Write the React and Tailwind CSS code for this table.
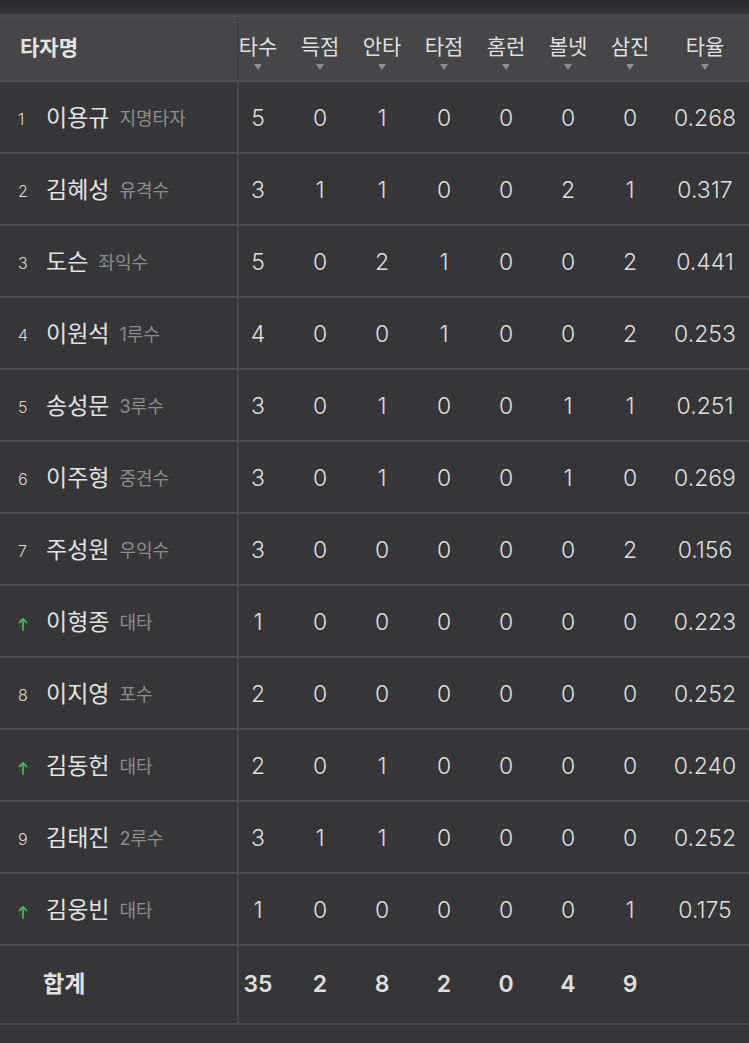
const cols = ["타수", "득점", "안타", "타점", "홈런", "볼넷", "삼진"];

const players = [
  { no: "1", name: "이용규", pos: "지명타자", s: [5, 0, 1, 0, 0, 0, 0], avg: "0.268" },
  { no: "2", name: "김혜성", pos: "유격수", s: [3, 1, 1, 0, 0, 2, 1], avg: "0.317" },
  { no: "3", name: "도슨", pos: "좌익수", s: [5, 0, 2, 1, 0, 0, 2], avg: "0.441" },
  { no: "4", name: "이원석", pos: "1루수", s: [4, 0, 0, 1, 0, 0, 2], avg: "0.253" },
  { no: "5", name: "송성문", pos: "3루수", s: [3, 0, 1, 0, 0, 1, 1], avg: "0.251" },
  { no: "6", name: "이주형", pos: "중견수", s: [3, 0, 1, 0, 0, 1, 0], avg: "0.269" },
  { no: "7", name: "주성원", pos: "우익수", s: [3, 0, 0, 0, 0, 0, 2], avg: "0.156" },
  { no: "up", name: "이형종", pos: "대타", s: [1, 0, 0, 0, 0, 0, 0], avg: "0.223" },
  { no: "8", name: "이지영", pos: "포수", s: [2, 0, 0, 0, 0, 0, 0], avg: "0.252" },
  { no: "up", name: "김동헌", pos: "대타", s: [2, 0, 1, 0, 0, 0, 0], avg: "0.240" },
  { no: "9", name: "김태진", pos: "2루수", s: [3, 1, 1, 0, 0, 0, 0], avg: "0.252" },
  { no: "up", name: "김웅빈", pos: "대타", s: [1, 0, 0, 0, 0, 0, 1], avg: "0.175" },
];

const totals = [35, 2, 8, 2, 0, 4, 9];

const font = { fontFamily: '"Inter", "Noto Sans CJK KR", sans-serif' };

function UpArrow() {
  return (
    <svg width="10" height="14" viewBox="0 0 10 14" className="mt-[2px]">
      <path d="M5 13V2M1.5 5.5L5 2l3.5 3.5" stroke="#4cb050" strokeWidth="1.8" fill="none" strokeLinecap="round" strokeLinejoin="round" />
    </svg>
  );
}

function Caret() {
  return <div className="w-0 h-0 border-l-[4px] border-r-[4px] border-t-[6px] border-l-transparent border-r-transparent border-t-[#8e8e90]" />;
}

const App = () => {
  return (
    <div className="w-[749px] h-[1043px] bg-[#363638] overflow-hidden text-[#dedede]" style={font}>
      <div className="h-[14px] bg-gradient-to-b from-[#2c2c2e] to-[#353537]" />
      <div className="h-[3px] bg-[#4c4c4e]" />

      {/* header */}
      <div className="flex h-[65px] bg-[#464648] border-b-2 border-[#525254]">
        <div className="w-[239px] shrink-0 border-r-2 border-[#3f3f41] flex items-center pl-[20px] text-[21px] font-bold text-[#e4e4e4] pb-[2px]">
          타자명
        </div>
        <div className="flex -ml-[12px]">
          {cols.map((c) => (
            <div key={c} className="w-[62px] flex flex-col items-center pt-[15px]">
              <span className="text-[21px] leading-[30px]">{c}</span>
              <div className="mt-[2px]"><Caret /></div>
            </div>
          ))}
          <div className="w-[88px] flex flex-col items-center pt-[15px]">
            <span className="text-[21px] leading-[30px]">타율</span>
            <div className="mt-[2px]"><Caret /></div>
          </div>
        </div>
      </div>

      {/* rows */}
      {players.map((p, i) => (
        <div key={i} className="flex h-[72px] border-b-2 border-[#4a4a4c] pt-[3px]">
          <div className="w-[239px] shrink-0 border-r-2 border-[#4a4a4c] -mt-[3px] pt-[3px] flex items-center">
            <div className="w-[46px] pl-[18px] flex items-center">
              {p.no === "up" ? <UpArrow /> : <span className="text-[16px] font-light text-[#d8d8d8]">{p.no}</span>}
            </div>
            <span className="text-[23px] text-[#e2e2e2]">{p.name}</span>
            <span className="ml-[10px] text-[18px] text-[#8c8c8e]">{p.pos}</span>
          </div>
          <div className="flex items-center -ml-[12px] font-light">
            {p.s.map((v, j) => (
              <div key={j} className="w-[62px] text-center text-[23px]">{v}</div>
            ))}
            <div className="w-[88px] text-center text-[23px]">{p.avg}</div>
          </div>
        </div>
      ))}

      {/* totals */}
      <div className="flex h-[79px] border-b-2 border-[#4a4a4c]">
        <div className="w-[239px] shrink-0 border-r-2 border-[#4a4a4c] flex items-center pl-[43px] text-[23px] font-bold text-[#e2e2e2]">
          합계
        </div>
        <div className="flex items-center -ml-[12px]">
          {totals.map((v, j) => (
            <div key={j} className="w-[62px] text-center text-[23px] font-semibold">{v}</div>
          ))}
        </div>
      </div>
    </div>
  );
};

export default App;
